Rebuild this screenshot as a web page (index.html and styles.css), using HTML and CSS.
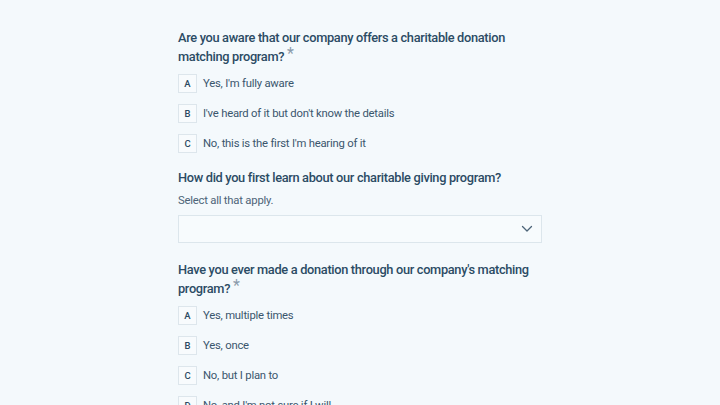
FILE: index.html
```html
<!DOCTYPE html>
<html lang="en">
<head>
<meta charset="utf-8">
<title>Survey</title>
<link rel="stylesheet" href="styles.css">
</head>
<body>
<main class="form">
  <section class="question">
    <h2 class="q-title">Are you aware that our company offers a charitable donation matching program? <span class="req">*</span></h2>
    <ul class="options">
      <li class="option"><span class="key">A</span><span class="label">Yes, I'm fully aware</span></li>
      <li class="option"><span class="key">B</span><span class="label">I've heard of it but don't know the details</span></li>
      <li class="option"><span class="key">C</span><span class="label">No, this is the first I'm hearing of it</span></li>
    </ul>
  </section>
  <section class="question">
    <h2 class="q-title">How did you first learn about our charitable giving program?</h2>
    <p class="q-hint">Select all that apply.</p>
    <div class="select">
      <svg class="chev" width="12" height="8" viewBox="0 0 12 8"><path d="M1.5 1.5 L6 6 L10.5 1.5" fill="none" stroke="#4d6478" stroke-width="1.3" stroke-linecap="round" stroke-linejoin="round"/></svg>
    </div>
  </section>
  <section class="question">
    <h2 class="q-title">Have you ever made a donation through our company's matching program? <span class="req">*</span></h2>
    <ul class="options">
      <li class="option"><span class="key">A</span><span class="label">Yes, multiple times</span></li>
      <li class="option"><span class="key">B</span><span class="label">Yes, once</span></li>
      <li class="option"><span class="key">C</span><span class="label">No, but I plan to</span></li>
      <li class="option"><span class="key">D</span><span class="label">No, and I'm not sure if I will</span></li>
    </ul>
  </section>
</main>
</body>
</html>
```
FILE: styles.css
```css
html, body {
  margin: 0;
  padding: 0;
  background: #f4f9fc;
  height: 100%;
  overflow: hidden;
}
body {
  font-family: Roboto, "Liberation Sans", sans-serif;
  color: #2c4a62;
}
.form {
  width: 364px;
  margin: 0 auto;
  padding-top: 28px;
  display: flex;
  flex-direction: column;
  gap: 15px;
}
.question {
  display: flex;
  flex-direction: column;
}
.q-title {
  margin: 0;
  font-size: 12.8px;
  letter-spacing: -0.32px;
  line-height: 19px;
  font-weight: 500;
  color: #2b4b64;
}
.req {
  color: #8a9bab;
  font-weight: 400;
  font-size: 16px;
  line-height: 0;
  position: relative;
  top: -2px;
}
.q-hint {
  margin: 4px 0 0;
  font-size: 11.3px;
  letter-spacing: -0.22px;
  line-height: 19px;
  color: #4d6478;
}
.select {
  margin: 5px 0 2px;
  height: 26px;
  border: 1px solid #dce6ec;
  background: #f7fbfd;
  display: flex;
  align-items: center;
  justify-content: flex-end;
  padding-right: 8px;
}
.options {
  list-style: none;
  margin: 8px 0 0;
  padding: 0;
  display: flex;
  flex-direction: column;
  gap: 11px;
}
.option {
  display: flex;
  align-items: center;
  gap: 6px;
  height: 19px;
}
.key {
  width: 17px;
  height: 17px;
  border: 1px solid #dde6ec;
  background: #f8fbfd;
  display: flex;
  align-items: center;
  justify-content: center;
  font-size: 9.5px;
  font-weight: 500;
  color: #2c4a62;
}
.label {
  font-size: 11.3px;
  letter-spacing: -0.22px;
  color: #3a566d;
}
```
